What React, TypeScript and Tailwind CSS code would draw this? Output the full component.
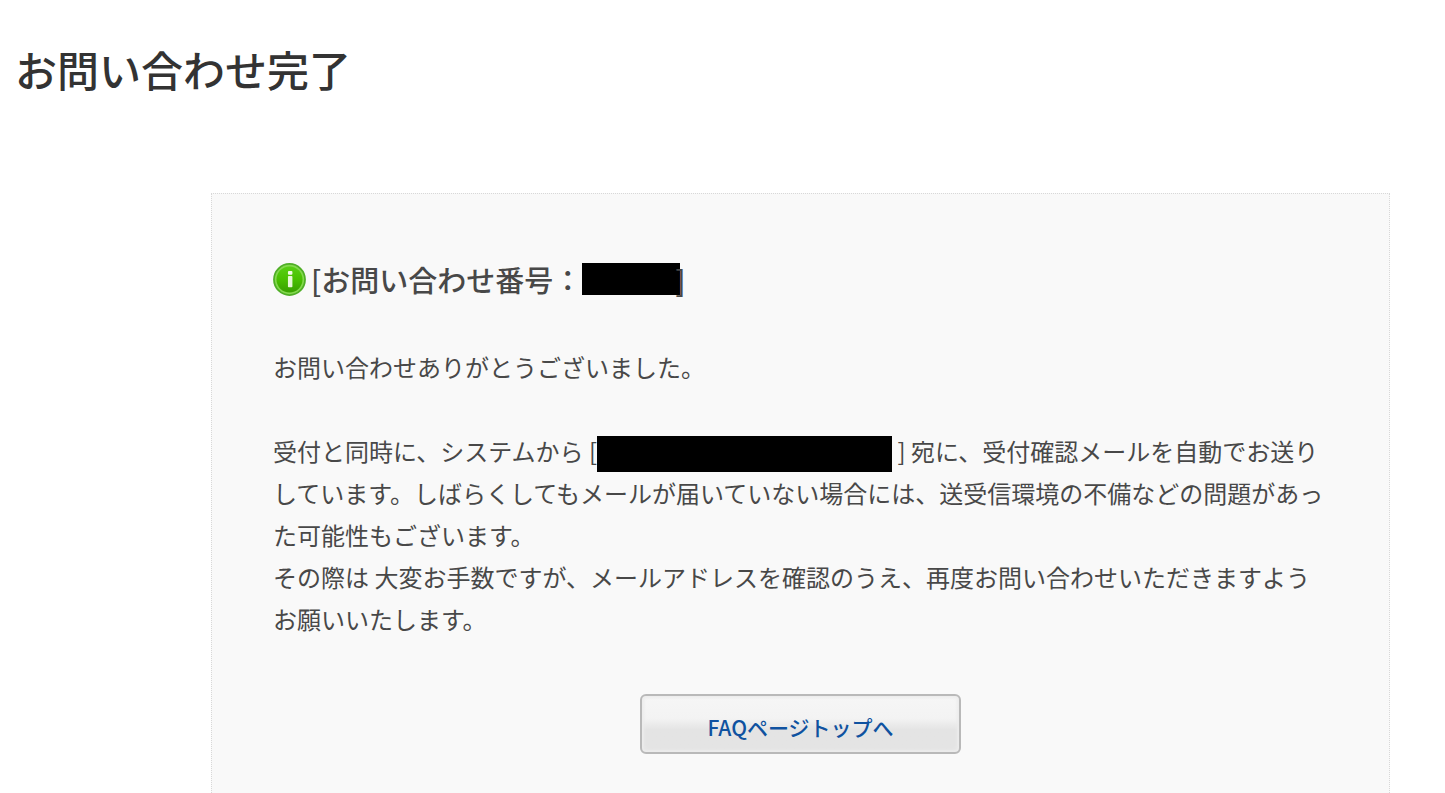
const messageLines = [
  'しています。しばらくしてもメールが届いていない場合には、送受信環境の不備などの問題があった可能性もございます。',
  'その際は 大変お手数ですが、メールアドレスを確認のうえ、再度お問い合わせいただきますようお願いいたします。',
];

function InfoIcon() {
  return (
    <svg className="size-[33px] shrink-0" viewBox="0 0 34 34" aria-hidden="true">
      <defs>
        <linearGradient id="info-fill" x1="0" y1="0" x2="0" y2="1">
          <stop offset="0" stopColor="#58cf14" />
          <stop offset="0.5" stopColor="#49c000" />
          <stop offset="1" stopColor="#38a000" />
        </linearGradient>
      </defs>
      <circle cx="17" cy="17" r="16" fill="#84d94e" stroke="#4fae26" strokeWidth="1.8" />
      <circle cx="17" cy="17" r="13.4" fill="url(#info-fill)" />
      <rect x="15.4" y="8.2" width="4.6" height="4" rx="1" fill="#f4fbe9" />
      <rect x="15.4" y="13.4" width="4.6" height="11.6" rx="0.8" fill="#e9f8da" />
    </svg>
  );
}

function App() {
  return (
    <div className="flex min-h-screen flex-col bg-white font-['Noto_Sans_CJK_JP',sans-serif] text-[#484848]">
      <h1 className="mt-[37px] ml-[15px] text-[42px] leading-[63px] font-medium text-[#333]">
        お問い合わせ完了
      </h1>

      <main className="mt-[93px] mr-[55px] ml-[211px] grow border border-b-0 border-dotted border-[#d8d8d8] bg-[#f9f9f9] pb-[39px]">
        <div className="pt-16 pr-[59px] pl-[61px]">
          <h2 className="flex h-11 items-center pb-0.5 text-[29px] leading-10 font-medium">
            <InfoIcon />
            <span className="ml-[5px]">[お問い合わせ番号：</span>
            <span className="h-8 w-[98px] bg-black" />
            <span className="-ml-[5px]">]</span>
          </h2>

          <div className="mt-11 text-2xl leading-[42px]">
            <p>お問い合わせありがとうございました。</p>
            <p className="mt-[42px]">
              受付と同時に、システムから [
              <span className="inline-block h-9 w-[295px] bg-black align-middle" />
              {' '}] 宛に、受付確認メールを自動でお送り{messageLines[0]}
            </p>
            <p>{messageLines[1]}</p>
          </div>
        </div>

        <div className="mt-[54px] flex justify-center">
          <button
            type="button"
            className="h-[60px] w-[321px] rounded-md border-2 border-[#b9b9b9] bg-linear-to-b from-[#f6f6f6] from-0% via-[#f3f3f3] via-40% to-[#e4e4e4] to-60% pt-1.5 text-[21px] font-medium text-[#0f52a0] shadow-[inset_0_0_3px_2px_#ececec]"
          >
            FAQページトップへ
          </button>
        </div>
      </main>
    </div>
  );
}

export default App;
